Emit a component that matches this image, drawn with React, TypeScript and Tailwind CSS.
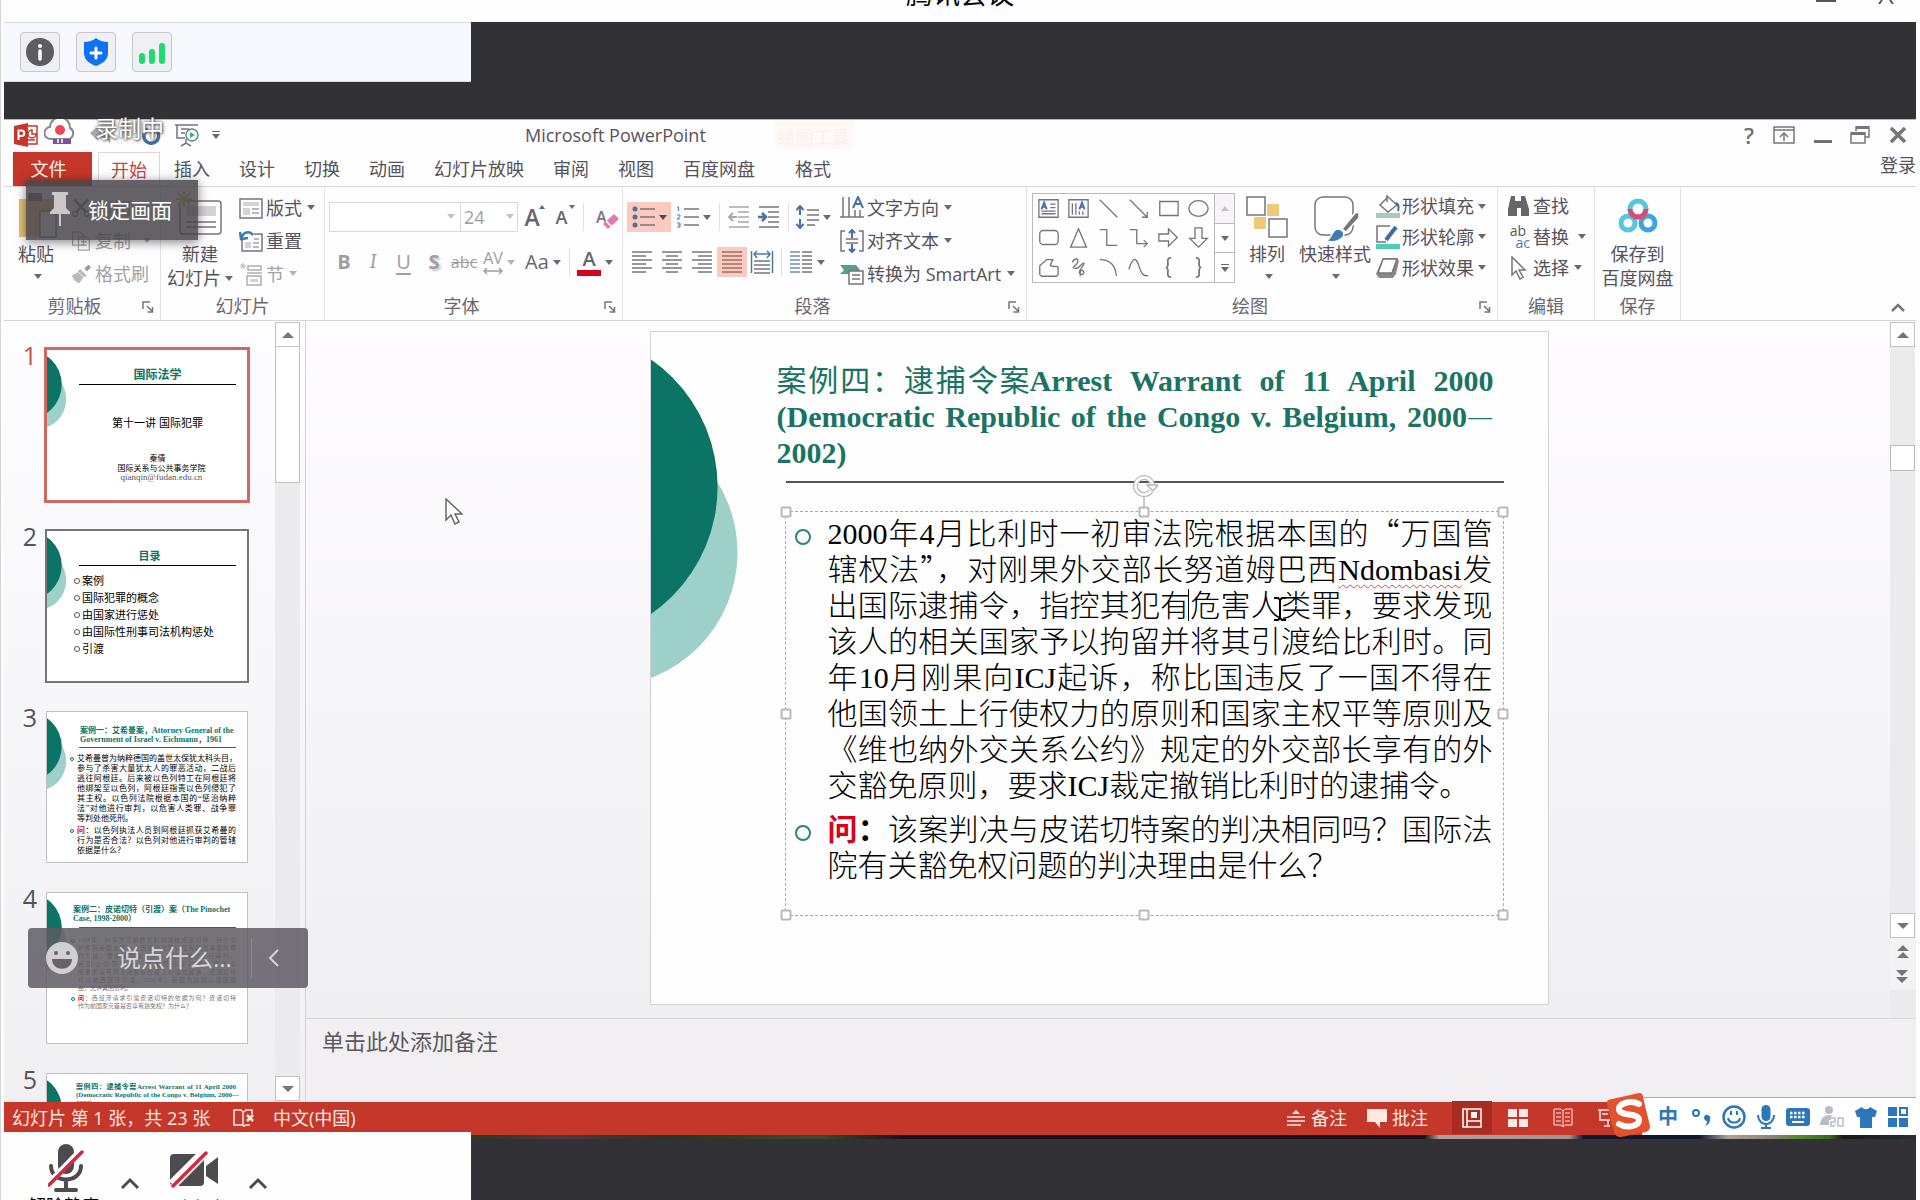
import React from "react";

type Kids = { children?: React.ReactNode; className?: string };

const Tri = ({ className = "text-[#6b686b]" }: { className?: string }) => (
  <svg viewBox="0 0 8 5" className={`h-[5px] w-2 shrink-0 ${className}`}>
    <path d="M0 0h8L4 5z" fill="currentColor" />
  </svg>
);

const Svg = ({ children, className = "h-6 w-6", box = "0 0 24 24" }: Kids & { box?: string }) => (
  <svg viewBox={box} className={`shrink-0 ${className}`} fill="none" stroke="#77747a" strokeWidth="1.5">
    {children}
  </svg>
);

const Launcher = () => (
  <button aria-label="对话框" className="absolute right-[6px] top-[9px]">
    <Svg className="h-3 w-3" box="0 0 12 12">
      <path d="M1 8V1h7M5 5l5 5M10.500 6v5h-5" />
    </Svg>
  </button>
);

const Group = ({ label, launcher, className = "", children }: Kids & { label: string; launcher?: boolean }) => (
  <section className={`flex shrink-0 flex-col border-r border-[#e6e1e6] ${className}`}>
    <div className="flex h-[105px]">{children}</div>
    <div className={`relative flex h-7 items-center justify-center text-[#6b686d] ${launcher ? "pr-6" : ""}`}>
      {label}
      {launcher && <Launcher />}
    </div>
  </section>
);

const Row = ({ icon, text, caret, dim, className = "h-[33px]", gap = "gap-1" }: { icon: React.ReactNode; text: string; caret?: string; dim?: boolean; className?: string; gap?: string }) => (
  <button className={`flex items-center whitespace-nowrap ${gap} ${className} ${dim ? "text-[#a5a2a6]" : ""}`}>
    {icon}
    <span>{text}</span>
    {caret && <Tri className={`${caret} ${dim ? "text-[#b5b2b6]" : "text-[#6b686b]"}`} />}
  </button>
);

const Sep = () => <span className="mx-1 h-7 w-px bg-[#e3dfe3]" />;

const Lines = ({ w = [20, 20, 20, 20, 20, 20], mode = "l", color = "#77747a" }: { w?: number[]; mode?: string; color?: string }) => (
  <Svg className="h-6 w-6" box="0 0 24 24">
    {w.map((n, i) => {
      const x = mode === "l" ? 2 : mode === "r" ? 22 - n : 12 - n / 2;
      return <path key={i} d={`M${x} ${2 + i * 4}h${n}`} stroke={color} />;
    })}
  </Svg>
);

const WinTitle = () => (
  <header className="flex h-[22px] shrink-0 overflow-hidden">
    <div className="flex-1 pl-5" />
    <h1 className="-mt-[26px] h-10 text-[27px] leading-10 text-black">腾讯会议</h1>
    <div className="flex flex-1 justify-end gap-10 pr-5">
      <button aria-label="最小化" className="h-0.5 w-5 bg-[#555]" />
      <button aria-label="关闭" className="h-1">
        <Svg className="h-1 w-5" box="0 0 20 4"><path d="M3 4l3-4M17 4l-3-4" stroke="#555" strokeWidth="2" /></Svg>
      </button>
    </div>
  </header>
);

const chip = "flex h-10 w-10 items-center justify-center rounded-sm border border-[#c9c8ce] bg-[#efeff4]";

const MeetingBar = () => (
  <div className="h-[97px] shrink-0 bg-[#323136]">
    <div className="flex h-[60px] w-[467px] items-center gap-4 border-t border-b border-[#dcdde2] bg-[#f7f8fd] pl-4">
      <button aria-label="会议信息" className={chip}>
        <Svg className="h-7 w-7" box="0 0 28 28">
          <circle cx="14" cy="14" r="14" fill="#5d5d61" stroke="none" />
          <circle cx="14" cy="8" r="2" fill="#fff" stroke="none" />
          <path d="M14 13v8" stroke="#fff" strokeWidth="3.500" strokeLinecap="round" />
        </Svg>
      </button>
      <button aria-label="安全" className={chip}>
        <Svg className="h-7 w-7" box="0 0 28 28">
          <path d="M14 0c3 2.500 7 4 12 4v11c0 7-6 11-12 13C8 26 2 22 2 15V4c5 0 9-1.500 12-4z" fill="#0e72f5" stroke="none" />
          <path d="M14 10v10M9 15h10" stroke="#fff" strokeWidth="3" strokeLinecap="round" />
        </Svg>
      </button>
      <button aria-label="网络" className={chip}>
        <Svg className="h-7 w-7" box="0 0 28 28">
          <g stroke="#20dc6c" strokeWidth="6" strokeLinecap="round"><path d="M4 18v5M14 14v9M24 8v15" /></g>
        </Svg>
      </button>
    </div>
  </div>
);

const PptTitle = () => (
  <div className="relative flex h-[33px] shrink-0 items-center border-t border-[#bbb] pb-0.5 pl-[10px]">
    <Svg className="h-6 w-6" box="0 0 24 24">
      <path d="M13 3h10v18H13" stroke="#c4372a" fill="#fff" />
      <path d="M18 7a4 4 0 1 0 4 4h-4zM14 17h7" stroke="#c4372a" />
      <path d="M0 3l14-3v24L0 21z" fill="#c4372a" stroke="none" />
      <path d="M4.500 17V7.500h3a2.700 2.700 0 0 1 0 5.500h-3" stroke="#fff" strokeWidth="2" />
    </Svg>
    <div className="-mt-1 ml-[6px] h-7 w-8">
      <Svg className="h-7 w-8" box="0 0 32 28">
        <path d="M9 20H7a6 6 0 0 1-1-12 10 10 0 0 1 20 1 6 6 0 0 1-1 11z" fill="#fff" stroke="#8a878c" strokeWidth="2" />
        <circle cx="16" cy="11" r="5" fill="#f04455" stroke="none" />
        <path d="M9 20h18v5H9z" fill="#7d4fa8" stroke="none" />
        <path d="M14 20v4M18 20v4" stroke="#fff" />
      </Svg>
    </div>
    <div className="relative ml-3 flex h-7 w-[78px] items-center">
      <Svg className="h-6 w-7" box="0 0 28 24"><path d="M2 10l8-7v5c10-1 14 4 12 13-2-5-5-7-12-7v4z" fill="#aaa8ab" stroke="none" /></Svg>
      <Svg className="ml-6 h-6 w-6" box="0 0 24 24"><path d="M17 8a7.500 7.500 0 1 1-9-2" stroke="#3f6da0" strokeWidth="3.500" /></Svg>
      <span className="absolute -top-[7px] left-[7px] whitespace-nowrap text-[23px] leading-7 text-white [text-shadow:0_0_3px_#444,1px_1px_3px_#555]">录制中</span>
    </div>
    <button aria-label="从头开始" className="ml-[9px]">
      <Svg className="h-6 w-6" box="0 0 24 24">
        <path d="M0 2h23M2 2v13h8M6 23l5-3 5 3M6 6h8M6 10h4M11 16v4" />
        <circle cx="17" cy="12" r="6" fill="#fff" stroke="#5a9080" /><path d="M15 9l5 3-5 3z" fill="#4aa68a" stroke="none" />
      </Svg>
    </button>
    <span className="ml-[13px] flex flex-col gap-0.5"><span className="h-px w-2 bg-[#6b686b]" /><Tri /></span>
    <div className="ml-[305px] text-lg">Microsoft PowerPoint</div>
    <div className="ml-[68px] h-7 w-20 border-t-4 border-[#fff8ea] bg-[#fffaf8] pl-1 text-lg leading-6 text-[#fdece7]">绘图工具</div>
    <div className="ml-auto flex items-center gap-[18px] pr-2">
      <button className="text-[22px] font-semibold leading-6 text-[#737075]">?</button>
      <button aria-label="功能区选项"><Svg className="h-5 w-6" box="0 0 24 20"><path d="M2 2h20v16H2zM2 5h20M12 16V9M8 12l4-4 4 4" /></Svg></button>
      <button aria-label="最小化" className="mt-3 h-[3px] w-[18px] bg-[#737075]" />
      <button aria-label="还原"><Svg className="h-5 w-5" box="0 0 20 20"><path d="M6 6V2h13v10h-4M1 8h14v10H1z" /><path d="M6 2.500h13M1 8.500h14" strokeWidth="3" /></Svg></button>
      <button aria-label="关闭"><Svg className="h-5 w-5" box="0 0 20 20"><path d="M3 3l14 14M17 3L3 17" strokeWidth="3.500" /></Svg></button>
    </div>
  </div>
);

const Tabs = () => (
  <nav className="flex h-[35px] shrink-0 items-center border-b border-[#dcd6da] pl-[9px]">
    <button className="h-full w-[79px] bg-[#c4372a] pr-2 text-[#fff3ee]">文件</button>
    <button className="ml-[6px] h-full w-[62px] border border-b-0 border-[#dcd6da] text-[#c4473a]">开始</button>
    <div className="ml-[14px] flex gap-[29px]">
      {["插入", "设计", "切换", "动画", "幻灯片放映", "审阅", "视图", "百度网盘"].map((t) => (
        <button key={t}>{t}</button>
      ))}
    </div>
    <button className="ml-10">格式</button>
    <button className="-mt-2 ml-auto">登录</button>
  </nav>
);

const FontGroup = () => (
  <Group label="字体" launcher className="w-[298px]">
    <div className="flex flex-col gap-[15px] pl-1 pt-[15px] text-[#a09da1]">
      <div className="flex h-[30px] items-center">
        <div className="relative">
          <select aria-label="字体" className="block h-[30px] w-[132px] appearance-none border border-[#dbd7db] bg-white"><option> </option></select>
          <Tri className="pointer-events-none absolute right-[6px] top-3 text-[#c4c1c5]" />
        </div>
        <div className="relative -ml-px">
          <select aria-label="字号" className="block h-[30px] w-[58px] appearance-none border border-[#dbd7db] bg-white pl-[3px] leading-6"><option>24</option></select>
          <Tri className="pointer-events-none absolute right-1 top-3 text-[#c4c1c5]" />
        </div>
        <button className="relative w-[31px] pr-[3px] text-[23px] font-semibold leading-8 text-[#68656a]">A<svg viewBox="0 0 6 4" className="absolute right-1 top-1 h-1 w-[6px]"><path d="M0 4h6L3 0z" fill="#4a6f9e" /></svg></button>
        <button className="relative w-[30px] pr-[5px] text-lg font-semibold leading-8 text-[#68656a]">A<svg viewBox="0 0 6 4" className="absolute right-1 top-1 h-1 w-[6px]"><path d="M0 0h6L3 4z" fill="#4a6f9e" /></svg></button>
        <Sep />
        <button className="relative ml-2 h-7 w-7 text-left text-base font-semibold leading-5 text-[#77747a]">A
          <Svg className="absolute bottom-0 right-1 h-5 w-5" box="0 0 20 20"><path d="M3 13L14 3l5 5-11 10z" fill="#e07bb0" stroke="none" /><path d="M6 10l6 6" stroke="#fff" /></Svg>
        </button>
      </div>
      <div className="flex h-[30px] items-center pl-px text-xl">
        <button className="w-7 font-bold">B</button>
        <button className="w-[30px] font-serif italic">I</button>
        <button className="w-[31px] underline decoration-2 underline-offset-4">U</button>
        <button className="w-[30px] font-bold [text-shadow:2px_2px_2px_#ccc]">S</button>
        <button className="w-[30px] text-base line-through">abc</button>
        <button className="flex w-[42px] items-center gap-1 pl-1">
          <span className="flex flex-col items-center text-base leading-[18px]">AV
            <Svg className="h-2 w-5" box="0 0 20 8"><path d="M1 4h18M4 1L1 4l3 3M16 1l3 3-3 3" stroke="#a09da1" /></Svg>
          </span>
          <Tri className="text-[#b5b2b6]" />
        </button>
        <button className="flex w-[44px] items-center gap-1 pl-1 text-[#68656a]">Aa<Tri /></button>
        <Sep />
        <button className="flex w-12 items-center gap-1 pl-[3px] text-[#68656a]"><span className="w-6 border-b-[6px] border-[#d9001b] font-semibold leading-[22px]">A</span><Tri /></button>
      </div>
    </div>
  </Group>
);

const cell = "flex h-[30px] w-[30px] items-center justify-center";

const ParagraphGroup = () => (
  <Group label="段落" launcher className="w-[404px]">
    <div className="flex w-[214px] flex-col gap-[15px] pl-1 pt-[15px]">
      <div className="flex h-[30px] items-center">
        <button aria-label="项目符号" className="flex h-[30px] w-11 items-center justify-center gap-1 bg-[#f9cabd]">
          <Svg className="h-6 w-6"><path d="M9 4h15M9 12h15M9 20h15" /><g fill="#5a6c94" stroke="none"><circle cx="4" cy="4" r="2.500" /><circle cx="4" cy="12" r="2.500" /><circle cx="4" cy="20" r="2.500" /></g></Svg><Tri className="text-[#4d4a4d]" />
        </button>
        <button aria-label="编号" className="flex w-11 items-center justify-center gap-1">
          <Svg className="h-6 w-6"><path d="M9 4h15M9 12h15M9 20h15" /><path d="M2 2h1.500v4M2 10h3v1.500L2 14h3M2 18h3v4H2M3 20h2" stroke="#4d7ba8" strokeWidth="1" /></Svg><Tri />
        </button>
        <Sep />
        <button aria-label="减少缩进" className={cell}><Svg className="h-6 w-6"><path d="M2 2h20M11 7h11M11 12h11M11 17h11M2 22h20" stroke="#aaa7ab" /><path d="M10 12H2M6 8l-4 4 4 4" stroke="#aaa7ab" strokeWidth="2" /></Svg></button>
        <button aria-label="增加缩进" className={cell}><Svg className="h-6 w-6"><path d="M2 2h20M11 7h11M11 12h11M11 17h11M2 22h20" /><path d="M1 12h8M5 8l4 4-4 4" stroke="#4673a4" strokeWidth="2.500" /></Svg></button>
        <Sep />
        <button aria-label="行距" className="flex w-10 items-center justify-center gap-1"><Svg className="h-6 w-6"><path d="M12 5h12M12 10h12M12 15h12M12 20h8" /><path d="M5 1v9M1.500 5L5 1l3.500 4M5 14v9M1.500 19L5 23l3.500-4" stroke="#4673a4" strokeWidth="2" /></Svg><Tri /></button>
      </div>
      <div className="flex h-[30px] items-center">
        <button aria-label="左对齐" className={cell}><Lines w={[20, 14, 20, 14, 20, 14]} /></button>
        <button aria-label="居中" className={cell}><Lines w={[20, 12, 20, 12, 20, 12]} mode="c" /></button>
        <button aria-label="右对齐" className={cell}><Lines w={[20, 14, 20, 14, 20, 14]} mode="r" /></button>
        <button aria-label="两端对齐" className={`${cell} bg-[#f9cabd]`}><Lines color="#9d6b68" /></button>
        <button aria-label="分散对齐" className={cell}><Svg className="h-6 w-6"><path d="M1.500 1v22M22.500 1v22" stroke="#4d7b98" /><path d="M4 11h16M4 15h16M4 19h16M4 23h16" /><path d="M4 4h16M7 1L4 4l3 4M17 1l3 3-3 4" stroke="#4d7ba8" /></Svg></button>
        <Sep />
        <button aria-label="分栏" className="flex w-[42px] items-center justify-center gap-1"><Svg className="h-6 w-6"><path d="M1 2h10M1 6h10M1 10h10M1 14h10M1 18h10M1 22h10" stroke="#6c93a8" /><path d="M13 2h10M13 6h10M13 10h10M13 14h10M13 18h10M13 22h10" /></Svg><Tri /></button>
      </div>
    </div>
    <div className="flex flex-col pl-[3px] pt-1">
      <Row gap="gap-[3px]" caret="ml-0.5" text="文字方向" icon={<Svg className="h-6 w-6"><path d="M3 1v20M9 1v20M15 14v7M20 14v7M0 21h24" /><path d="M13 12l5-11 5 11M15 8h6" stroke="#4673a4" strokeWidth="2" /></Svg>} />
      <Row gap="gap-[3px]" caret="ml-0.5" text="对齐文本" icon={<Svg className="h-6 w-6"><path d="M5 2H1v20h4M19 2h4v20h-4M6 10h12M6 14h12" /><path d="M12 9V1M9 4l3-3 3 3M12 15v8M9 20l3 3 3-3" stroke="#3d6fb5" strokeWidth="2" /></Svg>} />
      <Row gap="gap-[3px]" caret="ml-[3px]" text="转换为 SmartArt" icon={<Svg className="h-6 w-6"><path d="M0 3h16l4 5-4 4H0l4-4z" fill="#56a183" stroke="none" /><path d="M9 9h14v13H9z" fill="#fff" /><path d="M12 13h8M12 17h8" /></Svg>} />
    </div>
  </Group>
);

const shapes: React.ReactNode[] = [
  <><path d="M1 2h22v20H1zM14 7h6M14 11h6M4 15h16M4 18h16" /><path d="M4 13l3-8 3 8M5 10h4" stroke="#3d6fb5" strokeWidth="2" /></>,
  <><path d="M1 2h22v20H1zM5 6v13M9 6v13M13 15v4M17 15v4" /><path d="M13 13l3-8 3 8M14 10h4" stroke="#3d6fb5" strokeWidth="2" /></>,
  <path d="M2 2l20 20" />,
  <path d="M2 2l20 20M22 16v6h-6" />,
  <path d="M2 4h21v16H2z" />,
  <ellipse cx="12" cy="12" rx="11" ry="9" />,
  <rect x="2" y="4" width="21" height="16" rx="4" />,
  <path d="M12 2L3 23h18z" />,
  <path d="M2 3h8v18h12" />,
  <path d="M2 3h8v16h12M18 15l4 4-4 4" />,
  <path d="M1 8h11V2l10 10-10 10v-6H1z" />,
  <path d="M8 1v12H2l10 10 10-10h-6V1z" />,
  <path d="M2 20V10l8-7h7l-3 6c2 4 8 0 9 3v8l-2 2H4z" />,
  <path d="M5 6c2-5 8-5 6 0s-8 6-3 7 8-7 10-6-6 8-5 11 6 2 5-1-4-2-4 1v4" />,
  <path d="M2 3c12 0 18 6 19 19" />,
  <path d="M1 14C5 0 9 0 12 9s5 14 11 12" />,
  <path d="M15 1c-8 0 0 10-6 11 6 1-2 11 6 11" strokeWidth="2" />,
  <path d="M9 1c8 0 0 10 6 11-6 1 2 11-6 11" strokeWidth="2" />,
];

const Ribbon = () => (
  <div className="relative flex h-[134px] shrink-0 border-b border-[#d9d4d9] pl-[9px]">
    <Group label="剪贴板" launcher className="w-[148px]">
      <button className="flex w-[50px] flex-col items-center pt-1">
        <Svg className="h-12 w-11" box="0 0 44 48">
          <path d="M3 8h34v38H3z" fill="#e8c470" stroke="none" /><path d="M12 2h14v8H12z" fill="#6b686b" stroke="none" /><path d="M24 20h16v26H24z" fill="#fff" />
        </Svg>
        <span className="mt-[3px] pr-1 leading-6">粘贴</span>
        <span className="mt-2"><Tri /></span>
      </button>
      <div className="flex flex-col pl-2 pt-1">
        <Row dim text="剪切" icon={<Svg className="h-5 w-5"><path d="M4 2l14 15M20 2L6 17" strokeWidth="3" /><circle cx="5" cy="19" r="3" /><circle cx="19" cy="19" r="3" /></Svg>} />
        <Row dim text="复制" caret="ml-2" icon={<Svg className="h-5 w-5"><path d="M2 1h9l4 4v12H2zM9 7h9l4 4v12H9z" stroke="#aaa7ab" fill="#fff" /><path d="M12 13h7M12 17h7" stroke="#aaa7ab" /></Svg>} />
        <Row dim text="格式刷" icon={<Svg className="h-5 w-5"><path d="M16 5l5-4 3 3-5 5z" fill="#9c999d" stroke="none" /><path d="M11 6l8 8-3 2-8-7zM1 14l7-4 7 6-5 7c-4-1-7-4-9-9z" fill="#bbb8bc" stroke="none" /></Svg>} />
      </div>
    </Group>
    <Group label="幻灯片" className="w-[164px]">
      <button className="flex w-[78px] flex-col items-center pt-1">
        <Svg className="h-12 w-12" box="0 0 48 48">
          <rect x="4" y="10" width="41" height="33" rx="3" fill="#fff" /><path d="M10 15h30v10H10z" fill="#d4d2d6" stroke="none" /><path d="M10 31h30M10 36h30" /><path d="M8 0v16M0 8h16M2 2l12 12M14 2L2 14" stroke="#d8b64c" strokeWidth="2" />
        </Svg>
        <span className="mt-[3px] leading-6">新建</span>
        <span className="flex items-center gap-1 leading-6">幻灯片<Tri /></span>
      </button>
      <div className="flex flex-col pt-1">
        <Row gap="gap-[3px]" text="版式" caret="ml-0.5" icon={<Svg className="h-6 w-6"><path d="M1 3h22v19H1z" /><path d="M4 6h16v4H4zM4 12h7v7H4z" fill="#d4d2d6" stroke="none" /><path d="M13 13h7M13 17h7" strokeWidth="1" /></Svg>} />
        <Row gap="gap-[3px]" text="重置" icon={<Svg className="h-6 w-6"><path d="M3 10v12h20V5h-8" /><path d="M6 13h6v6H6z" fill="#d4d2d6" stroke="none" /><path d="M15 10h5M14 14h6M14 18h6" strokeWidth="1" /><path d="M2 10c2-8 9-8 12-4M1 3l1 7 7-1" stroke="#3f78b0" strokeWidth="2.500" /></Svg>} />
        <Row gap="gap-[3px]" dim text="节" caret="ml-0.5" icon={<Svg className="h-6 w-6"><path d="M9 4h13v4H9zM8 11h15M8 14h14v9H8z" stroke="#b0adb1" /><path d="M11 17h8v3h-8z" fill="#d4d2d6" stroke="none" /><path d="M4 1v6M1 4h6M2 2l4 4M6 2L2 6" stroke="#c9b8bc" strokeWidth="1" /></Svg>} />
      </div>
    </Group>
    <FontGroup />
    <ParagraphGroup />
    <Group label="绘图" launcher className="w-[471px]">
      <div className="ml-[5px] mt-[6px] flex h-[90px] border border-[#bcb9bd]">
        <div className="grid w-[181px] grid-cols-6 place-items-center">
          {shapes.map((s, i) => (
            <button key={i} aria-label={`形状 ${i + 1}`}><Svg className="h-[21px] w-[21px]">{s}</Svg></button>
          ))}
        </div>
        <div className="flex w-5 flex-col divide-y divide-[#bcb9bd] border-l border-[#bcb9bd]">
          <button aria-label="上" className="flex flex-1 items-center justify-center bg-[#f6f4f6]"><Tri className="rotate-180 text-[#c4c1c5]" /></button>
          <button aria-label="下" className="flex flex-1 items-center justify-center"><Tri /></button>
          <button aria-label="更多" className="flex flex-1 flex-col items-center justify-center gap-0.5"><span className="h-px w-2 bg-[#6b686b]" /><Tri /></button>
        </div>
      </div>
      <button className="ml-[9px] flex w-[46px] flex-col items-center pt-2">
        <Svg className="h-11 w-11" box="0 0 44 44"><path d="M22 9h12v12H22zM9 22h12v12H9z" fill="#edca78" stroke="none" /><path d="M2 2h18v18H2zM24 24h18v18H24z" fill="#fff" /></Svg>
        <span className="mt-[3px] leading-6">排列</span>
        <span className="mt-2 pl-1"><Tri /></span>
      </button>
      <button className="ml-[6px] flex w-20 flex-col items-center pt-2">
        <Svg className="h-12 w-12" box="0 0 48 48"><rect x="3" y="2" width="38" height="38" rx="8" fill="#fff" /><path d="M30 34l13-16 4-1v6L34 37z" fill="#77747a" stroke="#fff" /><path d="M14 46c6-2 5-10 11-12 6 0 9 5 5 9-4 4-11 4-16 3z" fill="#3f7bb0" stroke="#fff" /></Svg>
        <span className="-mt-px pr-0.5 leading-6">快速样式</span>
        <span className="mt-2"><Tri /></span>
      </button>
      <div className="flex flex-col pt-1">
        <Row gap="gap-0.5" className="h-[30px]" caret="ml-0.5" text="形状填充" icon={<Svg className="h-6 w-6"><path d="M0 19h24v5H0z" fill="#a9c9bf" stroke="none" /><path d="M12 3l9 8-9 7-8-7zM11 8V1" /><path d="M20 9c3 1 3 4 2 8" stroke="#3f6d8e" strokeWidth="2" /></Svg>} />
        <Row gap="gap-0.5" className="h-[31px]" caret="ml-0.5" text="形状轮廓" icon={<Svg className="h-6 w-6"><path d="M0 19h24v5H0z" fill="#4dd0ae" stroke="none" /><path d="M14 1H1v16h9" /><path d="M10 15L20 2" stroke="#3f6d9e" strokeWidth="4" /></Svg>} />
        <Row gap="gap-0.5" className="h-[31px]" caret="ml-0.5" text="形状效果" icon={<Svg className="h-6 w-6"><path d="M7 2h14l2 3-3 13-3 4H3l-3-4z" fill="#8b888c" stroke="none" /><path d="M7 3h14l-5 14H2z" fill="#fff" /></Svg>} />
      </div>
    </Group>
    <Group label="编辑" className="w-[97px]">
      <div className="flex flex-col pl-2 pt-1">
        <Row gap="gap-[3px]" className="h-[30px]" text="查找" icon={<Svg className="h-6 w-6"><path d="M5 2h4v5h6V2h4l4 13v7h-8v-8h-4v8H2v-7z" fill="#68656a" stroke="none" /></Svg>} />
        <Row gap="gap-[3px]" className="h-[31px]" caret="ml-[6px]" text="替换" icon={<span className="flex h-6 w-6 flex-col text-sm leading-3"><span>ab</span><span className="text-right text-[#4d7ba8]">ac</span></span>} />
        <Row gap="gap-[3px]" className="h-[31px]" caret="ml-0.5" text="选择" icon={<Svg className="h-6 w-6"><path d="M6 1v18l4-4 4 8 3-2-4-7h6z" fill="#fff" /></Svg>} />
      </div>
    </Group>
    <Group label="保存" className="w-[86px]">
      <button className="flex w-full flex-col items-center pt-2">
        <Svg className="h-11 w-10" box="0 0 40 44">
          <circle cx="10" cy="28" r="7" stroke="#55c5e0" strokeWidth="5" /><circle cx="30" cy="28" r="7" stroke="#3da5dc" strokeWidth="5" />
          <circle cx="20" cy="14" r="8" stroke="#55c5e0" strokeWidth="5" /><path d="M12 14a8 8 0 0 0 16 0" stroke="#e0486c" strokeWidth="5" />
        </Svg>
        <span className="mt-[3px] leading-6">保存到</span>
        <span className="leading-6">百度网盘</span>
      </button>
    </Group>
    <button aria-label="折叠功能区" className="absolute bottom-1 right-[10px]"><Svg className="h-4 w-4" box="0 0 16 16"><path d="M2 11l6-6 6 6" strokeWidth="2.500" /></Svg></button>
    <div className="absolute -top-[7px] left-[22px] flex h-[60px] w-[172px] items-center gap-4 bg-[#49474b]/85 pl-[22px] text-[21px] text-white shadow-[0_2px_10px_rgba(0,0,0,0.5)]">
      <Svg className="h-9 w-6" box="0 0 24 36"><path d="M4 0h16v3h-2v13l4 4v2H2v-2l4-4V3H4zM11 22h2v12h-2z" fill="#c9c8ca" stroke="none" /></Svg>
      锁定画面
    </div>
  </div>
);

const Circles = () => (
  <svg viewBox="0 0 897 673" className="absolute inset-0 h-full w-full">
    <circle cx="-48" cy="221" r="134" fill="#9dd0c9" />
    <circle cx="-89" cy="155" r="155" fill="#0b7464" />
  </svg>
);

const Thumb = ({ n, frame = "border-[#c2bec3]", num = "", children }: Kids & { n: number; frame?: string; num?: string }) => (
  <li className="flex h-[181px] shrink-0">
    <span className={`-mt-[10px] w-[34px] pr-[9px] text-right text-[25px] leading-8 ${num}`}>{n}</span>
    <div className={`relative h-[152px] w-[202px] overflow-hidden border bg-white text-black ${frame}`}>
      <Circles />
      {children}
    </div>
  </li>
);

const J = ({ children, className = "" }: Kids) => (
  <span className={`block whitespace-nowrap [text-align-last:justify] ${className}`}>{children}</span>
);

const serif = "font-['Liberation_Serif','Noto_Sans_CJK_SC',serif]";
const Ask = () => <b className="font-bold text-[#d9001b]">问</b>;

const ThumbBody = ({ groups, lead }: { groups: string[][]; lead: string }) => (
  <ul className={`mt-[6px] pl-[23px] pr-[11px] ${lead} ${serif}`}>
    {groups.map((g, i) => (
      <li key={i} className="relative mb-0.5 pl-[7px]">
        <span className="absolute left-0 top-[3px] h-1 w-1 rounded-full border border-[#0b7464]" />
        {g.map((l, k) => (
          <span key={l} className={`block whitespace-nowrap ${k < g.length - 1 ? "[text-align-last:justify]" : ""}`}>{i === 1 && k === 0 && <Ask />}{l}</span>
        ))}
      </li>
    ))}
  </ul>
);

const ScrollBtn = ({ up }: { up?: boolean }) => (
  <button aria-label={up ? "向上" : "向下"} className="flex h-[25px] w-[25px] shrink-0 items-center justify-center border border-[#c5c1c6] bg-white">
    <svg viewBox="0 0 12 6" className="h-[6px] w-3"><path d={up ? "M0 6h12L6 0z" : "M0 0h12L6 6z"} fill="#77747a" /></svg>
  </button>
);

const Thumbs = () => (
  <aside className="flex w-[302px] shrink-0 border-r border-[#d5d2d7] bg-linear-to-b from-[#fdfcfe] to-[#f0f0f3]">
    <ol className="flex w-[271px] flex-col overflow-hidden pl-2 pt-7">
      <Thumb n={1} num="text-[#c0564b]" frame="border-[#d0695f] ring-2 ring-[#d0695f]">
        <div className="flex flex-col items-center pl-8 pr-[11px] pt-[19px] leading-3">
          <b className="text-xs leading-3 text-[#0b7464]">国际法学</b>
          <span className="mt-[3px] h-px w-full bg-black" />
          <span className="mt-8 text-[11px] leading-3">第十一讲 国际犯罪</span>
          <span className="mt-6 text-[8px] leading-[10px]">秦倩</span>
          <span className="pl-2 text-[8px] leading-[10px]">国际关系与公共事务学院</span>
          <span className={`pl-2 text-[9px] leading-[9px] text-[#555] ${serif}`}>qianqin@fudan.edu.cn</span>
        </div>
      </Thumb>
      <Thumb n={2} frame="border-[#77747a] ring-1 ring-[#77747a]">
        <div className="flex flex-col pl-8 pr-[11px] pt-[19px]">
          <b className="pr-4 text-center text-[11px] leading-3 text-[#0b7464]">目录</b>
          <span className="mt-[3px] h-px w-full bg-black" />
          <ul className="-ml-[5px] mt-[6px] text-[11px] leading-[17px]">
            {["案例", "国际犯罪的概念", "由国家进行惩处", "由国际性刑事司法机构惩处", "引渡"].map((t) => (
              <li key={t} className="flex items-center gap-0.5 whitespace-nowrap"><span className="h-[6px] w-[6px] rounded-full border border-[#555]" />{t}</li>
            ))}
          </ul>
        </div>
      </Thumb>
      <Thumb n={3}>
        <h3 className={`whitespace-nowrap pl-[33px] pt-[14px] text-[8px] font-bold leading-[9px] text-[#0b7464] ${serif}`}>案例一：艾希曼案，Attorney General of the<br />Government of Israel v. Eichmann，1961</h3>
        <div className="ml-8 mr-[11px] mt-[3px] h-px bg-[#555]" />
        <ThumbBody lead="text-[8px] leading-[10px]" groups={[
          ["艾希曼曾为纳粹德国的盖世太保犹太科头目，", "参与了杀害大量犹太人的罪恶活动，二战后", "逃往阿根廷。后来被以色列特工在阿根廷将", "他绑架至以色列，阿根廷指责以色列侵犯了", "其主权。以色列法院根据本国的“惩治纳粹", "法”对他进行审判，以危害人类罪、战争罪", "等判处他死刑。"],
          ["：以色列执法人员到阿根廷抓获艾希曼的", "行为是否合法？以色列对他进行审判的管辖", "依据是什么？"]]} />
      </Thumb>
      <Thumb n={4}>
        <h3 className={`whitespace-nowrap pl-[26px] pt-[12px] text-[8px] font-bold leading-[9px] text-[#0b7464] ${serif}`}>案例二：皮诺切特（引渡）案（The Pinochet<br />Case, 1998-2000）</h3>
        <div className="ml-8 mr-[11px] mt-[4px] h-px bg-[#555]" />
        <div className="pl-px pt-0.5 text-[#777]">
          <ThumbBody lead="text-[6px] leading-[8px]" groups={[
            ["1998年，80多岁高龄的智利前总统皮诺切特，持外交", "护照到英国治病，被西班牙法官以犯有酷刑等国际罪", "行为由，要求英国逮捕并引渡至西班牙进行审判，", "英国上议院裁定，前国家元首对酷刑罪不享", "能要求享有司法豁免权改变了引渡过起诉，皮诺切特", "可以被西班牙引渡。2000年，英国内政部以健康理", "由，允许其回智利。"],
            ["：西班牙请求引渡皮诺切特的依据为何？皮诺切特", "作为前国家元首是否享有豁免权？为什么？"]]} />
        </div>
      </Thumb>
      <Thumb n={5}>
        <h3 className={`pl-[29px] pr-[11px] pt-[9px] text-[7px] font-bold leading-[8px] text-[#0b7464] ${serif}`}>
          <J>案例四：逮捕令案Arrest Warrant of 11 April 2000</J><J>(Democratic Republic of the Congo v. Belgium, 2000—</J>2002)
        </h3>
      </Thumb>
    </ol>
    <div className="mt-px flex w-[25px] flex-col bg-[#ebebed]">
      <ScrollBtn up />
      <span className="h-[136px] border border-t-0 border-[#c5c1c6] bg-white" />
      <span className="flex-1" />
      <ScrollBtn />
      <span className="h-px" />
    </div>
  </aside>
);

const handle = "absolute h-[11px] w-[11px] -translate-x-1/2 -translate-y-1/2 rounded-xs border-2 border-[#bab7bc] bg-white";
const cjk = "font-['Noto_Sans_CJK_SC',sans-serif] leading-none";
const bullet = "ml-[9px] mr-[17px] mt-[13px] h-4 w-4 shrink-0 rounded-full border-2 border-[#2b8674]";

const Slide = () => (
  <article className={`relative h-[674px] w-[899px] shrink-0 border border-[#d5d2d7] bg-[#fefefe] ${serif}`}>
    <Circles />
    <h2 className="relative pl-[126px] pr-[54px] pt-[31px] text-[30px] font-bold leading-9 text-[#1a7464]">
      <J className="h-9"><span className={`${cjk} inline-block w-[253px] font-normal`}>案例四：逮捕令案</span>Arrest Warrant of 11 April 2000</J>
      <J className="h-9">(Democratic Republic of the Congo v. Belgium, 2000<span className={`${cjk} font-light`}>—</span></J>
      <span className="block">2002)</span>
    </h2>
    <div className="ml-[135px] mr-[44px] mt-[10px] h-0.5 bg-[#555]" />
    <div className="relative ml-[134px] mr-[44px] mt-7 h-[405px] border border-dashed border-[#aaa7ab] pt-1 text-[30px] font-light leading-9 text-black">
      <ul>
        <li className="flex">
          <span className={bullet} />
          <p className="mr-[10px] flex-1">
            <J>2000年4月比利时一初审法院根据本国的<span className={`${cjk} font-light`}>“</span>万国管</J>
            <J>辖权法<span className={`${cjk} font-light`}>”</span>，对刚果外交部长努道姆巴西<span className="underline decoration-[#e0484d] decoration-wavy decoration-1 underline-offset-4">Ndombasi</span>发</J>
            <J>出国际逮捕令，指控其犯有<span className="relative"><i className="absolute -left-0.5 top-0 h-8 w-px bg-black" />危</span>害人<span className="relative"><svg viewBox="0 0 14 24" className="absolute -left-2 top-2 h-6 w-[14px]" fill="none" stroke="#000" strokeWidth="2"><path d="M1 1h4l2 2 2-2h4M7 3v18M1 23h4l2-2 2 2h4" /></svg>类</span>罪，要求发现</J>
            <J>该人的相关国家予以拘留并将其引渡给比利时。同</J>
            <J>年10月刚果向ICJ起诉，称比国违反了一国不得在</J>
            <J>他国领土上行使权力的原则和国家主权平等原则及</J>
            <J>《维也纳外交关系公约》规定的外交部长享有的外</J>
            <span className="block whitespace-nowrap">交豁免原则，要求ICJ裁定撤销比利时的逮捕令。</span>
          </p>
        </li>
        <li className="mt-2 flex">
          <span className={bullet} />
          <p className="mr-[10px] flex-1">
            <J><Ask /><b className="font-bold">：</b>该案判决与皮诺切特案的判决相同吗？国际法</J>
            <span className="block whitespace-nowrap">院有关豁免权问题的判决理由是什么？</span>
          </p>
        </li>
      </ul>
      <i className={`${handle} left-0 top-0`} /><i className={`${handle} left-full top-0`} />
      <i className={`${handle} left-0 top-1/2`} /><i className={`${handle} left-full top-1/2`} />
      <i className={`${handle} left-0 top-full`} /><i className={`${handle} left-1/2 top-full`} /><i className={`${handle} left-full top-full`} />
      <svg viewBox="0 0 28 40" className="absolute -top-10 left-1/2 h-10 w-7 -translate-x-1/2" fill="none" stroke="#bab7bc">
        <path d="M14 24v12" strokeWidth="1.500" />
        <path d="M21 19a8.500 8.500 0 1 1 1.500-6" strokeWidth="5" /><path d="M21 19a8.500 8.500 0 1 1 1.500-6" stroke="#fff" strokeWidth="2.500" />
        <path d="M17 13h11l-5 6z" fill="#fff" strokeWidth="1.500" />
      </svg>
      <i className={`${handle} left-1/2 top-0`} />
    </div>
  </article>
);

const Editor = () => (
  <main className="flex min-w-0 flex-1 flex-col">
    <div className="relative flex h-[698px] shrink-0 border-b border-[#d9d7db] bg-linear-to-b from-[#fefcfe] to-[#efeff1]">
      <div className="flex min-w-0 flex-1 justify-center pl-0.5 pt-[10px]"><Slide /></div>
      <svg viewBox="0 0 18 28" className="absolute left-[139px] top-[177px] h-7 w-[18px]" fill="#fff" stroke="#666" strokeWidth="1.500"><path d="M1 1v21l5-5 4 9 4-2-4-8h7z" /></svg>
      <div className="mt-px flex w-[25px] shrink-0 flex-col bg-[#ebebee]">
        <ScrollBtn up />
        <span className="h-[98px]" />
        <span className="h-[26px] border border-[#bbb8bc] bg-white" />
        <span className="flex-1" />
        <ScrollBtn />
        {[0, 1].map((k) => (
          <button key={k} aria-label={k ? "下一张" : "上一张"} className={`flex h-[26px] items-center justify-center bg-[#f3f2f4] ${k ? "mb-7 rotate-180" : ""}`}>
            <svg viewBox="0 0 12 14" className="h-[14px] w-3"><path d="M0 7h12L6 1zM0 14h12L6 8z" fill="#77747a" /></svg>
          </button>
        ))}
      </div>
      <span className="w-px" />
    </div>
    <div className="flex-1 bg-[#f1eff2] px-4 pt-[6px]">
      <input aria-label="备注" placeholder="单击此处添加备注" className="h-8 w-full bg-transparent text-[22px] placeholder:text-[#5c595e]" />
    </div>
  </main>
);

const Status = () => (
  <footer className="relative flex h-[33px] shrink-0 items-center bg-[#c4372a] pb-[2px] pl-2 text-[#ffe9e2]">
    <span className="w-[221px] whitespace-nowrap">幻灯片 第 1 张，共 23 张</span>
    <button aria-label="拼写检查"><Svg className="h-[18px] w-[22px]" box="0 0 22 18"><path d="M10 16V3L8 1H1v15h8l2 1 2-1h4M11 3l2-2h6v4" stroke="#ffe9e2" /><path d="M14 6l6 6M20 6l-6 6" stroke="#ffe9e2" strokeWidth="2.500" /></Svg></button>
    <button className="ml-[18px]">中文(中国)</button>
    <div className="ml-auto flex h-full items-center pr-[306px]">
      <button className="flex items-center gap-[6px]"><Svg className="h-[18px] w-[18px]" box="0 0 18 18"><path d="M5 5h8L9 1z" fill="#ffe9e2" stroke="none" /><path d="M0 8h18M0 12h18M0 16h14" stroke="#ffe9e2" /></Svg>备注</button>
      <button className="ml-5 flex items-center gap-[5px]"><Svg className="h-5 w-5" box="0 0 20 20"><path d="M0 1h20v13h-7v6l-5-6H0z" fill="#ffe9e2" stroke="none" /></Svg>批注</button>
      <button aria-label="普通视图" className="ml-6 flex h-[33px] w-10 items-center justify-center bg-[#a92c20]"><Svg className="h-5 w-5" box="0 0 20 20"><path d="M1 1h18v18H1zM5 1v18M5 13h14" stroke="#fff" /><path d="M9 4h6v6H9z" fill="#fff" stroke="none" /></Svg></button>
      <button aria-label="幻灯片浏览" className="ml-4"><Svg className="h-5 w-5" box="0 0 20 20"><path d="M0 1h9v8H0zM11 1h9v8h-9zM0 11h9v8H0zM11 11h9v8h-9z" fill="#ffe9e2" stroke="none" /></Svg></button>
      <button aria-label="阅读视图" className="ml-[25px]"><Svg className="h-5 w-5" box="0 0 20 20"><path d="M10 3L8 1H1v16h7l2 2 2-2h7V1h-7zv16M3 5h5M3 9h5M3 13h5M12 5h5M12 9h5M12 13h5" stroke="#ffe9e2" strokeWidth="1" /></Svg></button>
      <button aria-label="放映" className="ml-[25px]"><Svg className="h-5 w-3" box="0 0 12 20"><path d="M0 2h12M2 2v10h10M4 6h6M10 12v5M6 18h6" stroke="#ffe9e2" /></Svg></button>
    </div>
    <div className="absolute -top-[5px] bottom-0 right-0 flex w-[274px] items-center gap-[10px] border-t border-[#aaa] bg-white pl-[16px]">
      <svg viewBox="0 0 46 46" className="absolute -left-[36px] -top-[6px] h-[46px] w-[46px]">
        <path d="M2 8L33 1c3 0 4 2 4 4l7 29c0 3-1 5-4 6l-25 5c-4 0-6-2-7-5L1 12c0-2 0-3 1-4z" fill="#e2522c" />
        <path d="M33 12c-8-4-20-1-20 5 0 8 20 3 20 11 0 6-12 9-20 4" fill="none" stroke="#fff" strokeWidth="6" strokeLinecap="round" />
      </svg>
      <span className="text-xl font-bold leading-6 text-[#2b77ba]">中</span>
      <Svg className="ml-1 h-6 w-5" box="0 0 20 24"><circle cx="4" cy="8" r="3" stroke="#2b77ba" strokeWidth="2" /><path d="M12 12a3 3 0 1 1 6 2c0 4-2 6-5 7 2-2 2-4 2-5-2 0-3-2-3-4z" fill="#2b77ba" stroke="none" /></Svg>
      <Svg className="h-6 w-6"><circle cx="12" cy="12" r="10.500" stroke="#2b77ba" strokeWidth="2.500" /><path d="M9 6v4M15 6v4M6 13c1 6 11 6 12 0" stroke="#2b77ba" strokeWidth="2" /></Svg>
      <Svg className="h-6 w-5" box="0 0 20 24"><rect x="5.500" y="0" width="9" height="16" rx="4.500" fill="#2b77ba" stroke="none" /><path d="M2 10c0 12 16 12 16 0M10 19v4M5 23h10" stroke="#2b77ba" strokeWidth="2" /></Svg>
      <Svg className="h-6 w-6"><rect x="0" y="3" width="24" height="18" rx="3" fill="#2b77ba" stroke="none" /><path d="M4 8h16M4 12h16" stroke="#fff" strokeWidth="2.500" strokeDasharray="2.500 1.500" /><path d="M6 17h12" stroke="#fff" strokeWidth="2" /></Svg>
      <Svg className="h-6 w-6"><circle cx="9" cy="5" r="4" fill="#b9bdc6" stroke="none" /><path d="M0 20c0-12 15-12 17-6v6z" fill="#b9bdc6" stroke="none" /><path d="M11 13h4v4h-4v4h4M18 13h5v8h-5z" stroke="#fff" strokeWidth="4" /><path d="M11 13h4v4h-4v4h4M18 13h5v8h-5z" stroke="#b9bdc6" /></Svg>
      <Svg className="h-6 w-6"><path d="M8 2c2 3 6 3 8 0l7 4-2 6h-3v11H6V12H3L1 6z" fill="#2b77ba" stroke="none" /></Svg>
      <Svg className="h-5 w-5" box="0 0 20 20"><path d="M0 0h9v9H0zM0 11h9v9H0zM11 11h9v9h-9z" fill="#2b77ba" stroke="none" /><path d="M12 1h7v7h-7z" stroke="#2b77ba" strokeWidth="2" /></Svg>
    </div>
  </footer>
);

const Chevron = () => <Svg className="h-5 w-5" box="0 0 20 20"><path d="M2 14l8-8 8 8" stroke="#4d4b50" strokeWidth="3" /></Svg>;

const Controls = () => (
  <div className="flex h-[65px] shrink-0">
    <div className="relative -mt-[3px] flex w-[467px] items-start bg-[#fefefe] pl-6 pt-3">
      <button className="flex w-[76px] flex-col items-center">
        <Svg className="h-12 w-9" box="0 0 36 48">
          <rect x="10" y="0" width="16" height="30" rx="8" fill="#4d4b50" stroke="none" />
          <path d="M3 22c0 18 30 18 30 0M18 37v7M8 46h20" stroke="#4d4b50" strokeWidth="4" strokeLinecap="round" />
          <path d="M0 40L32 7" stroke="#fff" strokeWidth="6" /><path d="M1 41L34 8" stroke="#d5283e" strokeWidth="3.500" strokeLinecap="round" />
        </Svg>
        <span className="mt-0.5 pr-1 text-black">解除静音</span>
      </button>
      <button aria-label="音频选项" className="mt-[30px] pl-4"><Chevron /></button>
      <button className="ml-[14px] flex w-20 flex-col items-center">
        <Svg className="h-12 w-12" box="0 0 48 48">
          <rect x="0" y="10" width="34" height="32" rx="4" fill="#4d4b50" stroke="none" /><path d="M36 22l12-9v27l-12-8z" fill="#4d4b50" stroke="none" />
          <path d="M1 39L34 6" stroke="#fff" strokeWidth="6" /><path d="M3 43L37 9" stroke="#fff" strokeWidth="6" /><path d="M3 42L36 9" stroke="#d5283e" strokeWidth="3.500" strokeLinecap="round" />
        </Svg>
        <span className="mt-1 text-black">开启视频</span>
      </button>
      <button aria-label="视频选项" className="ml-[14px] mt-[30px]"><Chevron /></button>
    </div>
    <div className="flex-1 bg-[#323136]">
      <div className="h-1 bg-[linear-gradient(90deg,#2c3a24_0%,#4c3a3a_6%,#2a3424_14%,#3f4a2c_24%,#15151d_30%,#15151d_66%,#b39e9b_67%,#a8908c_76%,#10182c_77%,#10182c_85%,#aaa39a_87%,#8d8378_90%,#4f8a2c_92%,#3b6a24_94%,#17181a_95%,#2c3030_100%)]" />
    </div>
  </div>
);

export default function App() {
  return (
    <div className="relative flex h-screen flex-col overflow-hidden border-l border-[#d5d5d8] bg-[#fefdff] pl-[3px] pr-1 font-['Open_Sans','Noto_Sans_CJK_SC',sans-serif] text-lg leading-6 text-[#565358]">
      <WinTitle />
      <MeetingBar />
      <PptTitle />
      <Tabs />
      <Ribbon />
      <div className="relative flex min-h-0 flex-1">
        <Thumbs />
        <Editor />
        <div className="absolute bottom-[114px] left-6 flex h-[60px] w-[280px] items-center rounded-sm bg-[#5e5c61]/85 text-[#d6d5d8]">
          <Svg className="ml-[18px] h-8 w-8" box="0 0 32 32"><circle cx="16" cy="16" r="16" fill="#d0cfd2" stroke="none" /><circle cx="10" cy="11" r="2" fill="#666469" stroke="none" /><circle cx="22" cy="11" r="2" fill="#666469" stroke="none" /><path d="M6 17h20c0 13-20 13-20 0z" fill="#666469" stroke="none" /></Svg>
          <span className="ml-3 h-9 w-px bg-[#7d7b80]" />
          <input aria-label="聊天" placeholder="说点什么..." className="ml-[26px] w-[134px] bg-transparent text-2xl placeholder:text-[#d6d5d8]" />
          <span className="h-10 w-px bg-[#8b898e]" />
          <button aria-label="收起" className="ml-4"><Svg className="h-5 w-3" box="0 0 12 20"><path d="M10 2l-8 8 8 8" stroke="#d6d5d8" strokeWidth="2" /></Svg></button>
        </div>
      </div>
      <Status />
      <Controls />
    </div>
  );
}
